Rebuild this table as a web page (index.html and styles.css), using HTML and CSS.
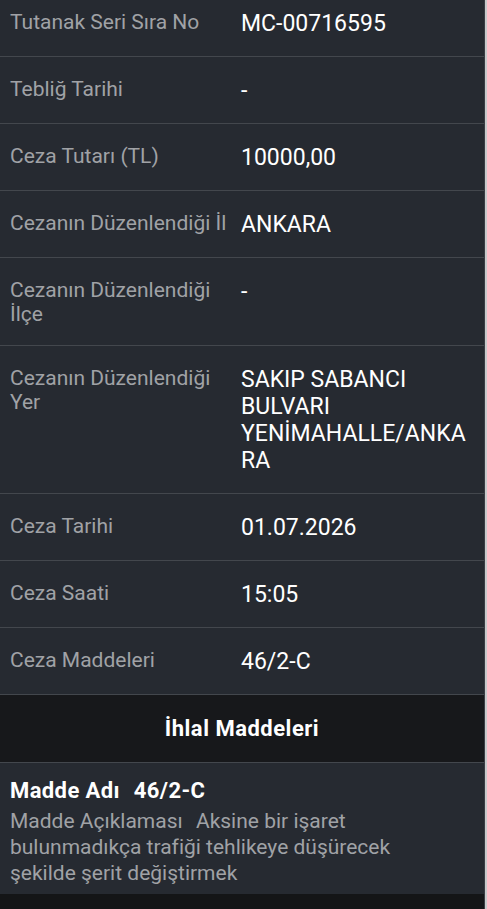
FILE: index.html
```html
<!DOCTYPE html>
<html lang="tr">
<head>
<meta charset="utf-8">
<title>Ceza Detayı</title>
<link rel="stylesheet" href="styles.css">
</head>
<body>
<div class="screen">
  <dl class="details">
    <div class="row"><dt>Tutanak Seri Sıra No</dt><dd>MC-00716595</dd></div>
    <div class="row"><dt>Tebliğ Tarihi</dt><dd>-</dd></div>
    <div class="row"><dt>Ceza Tutarı (TL)</dt><dd>10000,00</dd></div>
    <div class="row"><dt>Cezanın Düzenlendiği İl</dt><dd>ANKARA</dd></div>
    <div class="row"><dt>Cezanın Düzenlendiği İlçe</dt><dd>-</dd></div>
    <div class="row"><dt>Cezanın Düzenlendiği Yer</dt><dd>SAKIP SABANCI BULVARI YENİMAHALLE/ANKARA</dd></div>
    <div class="row"><dt>Ceza Tarihi</dt><dd>01.07.2026</dd></div>
    <div class="row"><dt>Ceza Saati</dt><dd>15:05</dd></div>
    <div class="row"><dt>Ceza Maddeleri</dt><dd>46/2-C</dd></div>
  </dl>
  <h2 class="section-title">İhlal Maddeleri</h2>
  <div class="madde">
    <p class="madde-name"><span class="madde-key">Madde Adı</span> 46/2-C</p>
    <p class="madde-desc"><span class="madde-key">Madde Açıklaması</span> Aksine bir işaret bulunmadıkça trafiği tehlikeye düşürecek şekilde şerit değiştirmek</p>
  </div>
  <div class="bottom"></div>
</div>
</body>
</html>
```
FILE: styles.css
```css
html, body {
  margin: 0;
  padding: 0;
}
body {
  background: #c9cacc;
  font-family: Roboto, "Noto Sans", sans-serif;
  overflow: hidden;
  height: 909px;
}
.screen {
  width: 484px;
  height: 909px;
  background: #141517;
  border-right: 1px solid #3a3e44;
  overflow: hidden;
}
.details {
  margin: -10px 0 0 0;
  padding: 0;
  background: #262a31;
}
.row {
  display: grid;
  grid-template-columns: 221px 1fr;
  column-gap: 10px;
  padding: 20px 8px 19px 10px;
  border-bottom: 1px solid #43474d;
}
.row dt {
  margin: 0;
  font-size: 21px;
  line-height: 24px;
  color: #a0a2a6;
}
.row dd {
  margin: 0;
  font-size: 23px;
  line-height: 27px;
  color: #ffffff;
  overflow-wrap: anywhere;
}
.section-title {
  margin: 0;
  height: 67px;
  display: flex;
  align-items: center;
  justify-content: center;
  background: #17181b;
  border-bottom: 1px solid #43474d;
  color: #ffffff;
  font-size: 22px;
  font-weight: 700;
  letter-spacing: 0.5px;
}
.madde {
  background: #262a31;
  padding: 15px 40px 8px 10px;
}
.madde-key {
  margin-right: 8px;
}
.madde-name {
  margin: 0;
  font-size: 22px;
  font-weight: 700;
  letter-spacing: 0.4px;
  line-height: 26px;
  color: #ffffff;
}
.madde-desc {
  margin: 4px 0 0 0;
  font-size: 21px;
  line-height: 26px;
  color: #a0a2a6;
}
.bottom {
  height: 16px;
  background: #141517;
}
```
